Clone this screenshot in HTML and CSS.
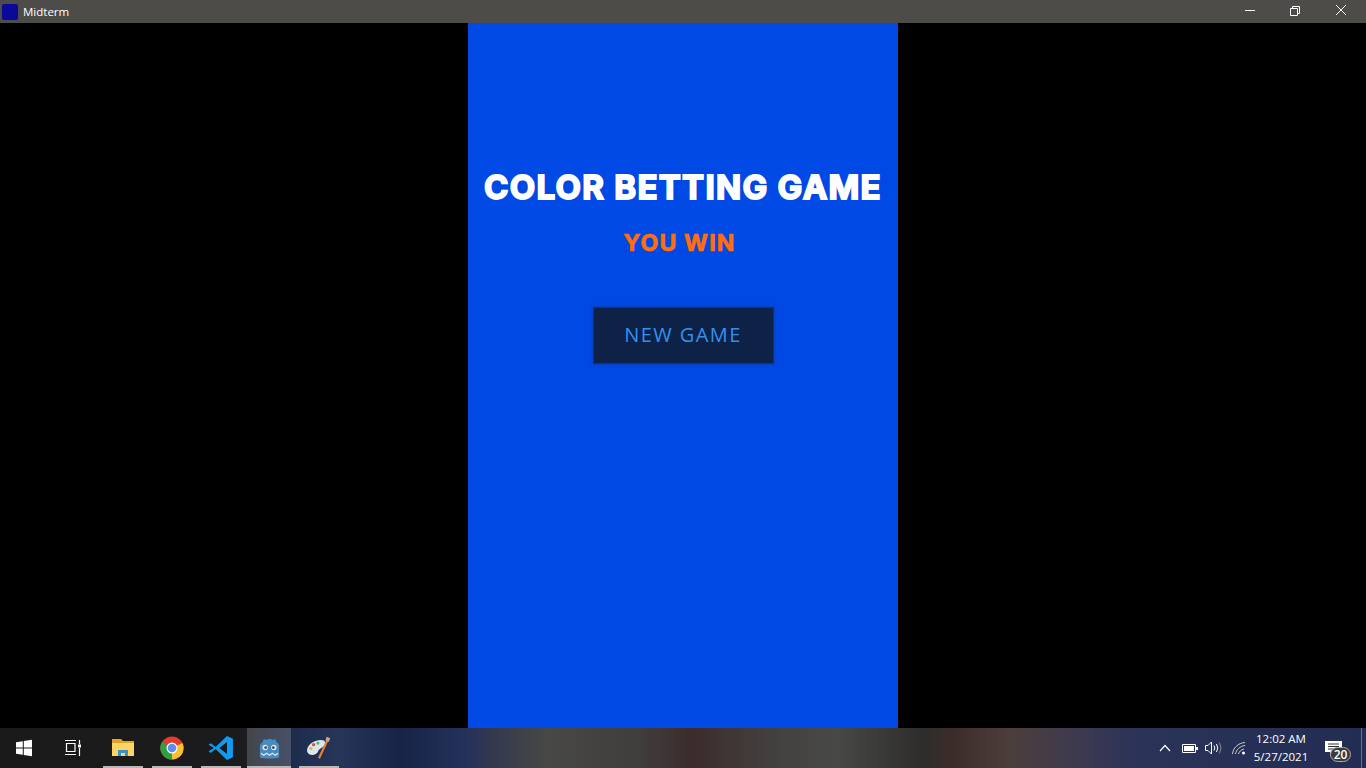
FILE: index.html
```html
<!DOCTYPE html>
<html>
	<head>
		<meta charset="UTF-8">
		<title>Midterm</title>
		<link rel="stylesheet" href="styles.css">
	</head>
	<body>
		<div class="titlebar">
			<span class="app-icon"></span>
			<span class="app-name">Midterm</span>
			<div class="win-btns">
				<svg class="win-btn" viewBox="0 0 46 23"><path d="M17 10.500h10" stroke="#fff" fill="none"/></svg>
				<svg class="win-btn" viewBox="0 0 46 23"><path d="M16.500 8.500h7v7h-7zM18.500 8.500v-2h7v7h-2" stroke="#fff" fill="none"/></svg>
				<svg class="win-btn" viewBox="0 0 46 23"><path d="M16 5l10 10M26 5l-10 10" stroke="#fff" fill="none"/></svg>
			</div>
		</div>

		<div class="stage">
			<div class="game">
				<h1 class="game-title">COLOR BETTING GAME</h1>
				<p class="game-result">YOU WIN</p>
				<button class="new-game">NEW GAME</button>
			</div>
		</div>

		<div class="taskbar">
			<div class="task-icon start">
				<svg width="18" height="18" viewBox="0 0 18 18"><path d="M1 3.200l6.800-1v6.300H1zM8.800 2l8.200-1.200v7.700H8.800zM1 9.500h6.800v6.300l-6.800-1zM8.800 9.500H17v7.700L8.800 16z" fill="#fff"/></svg>
			</div>
			<div class="task-icon view">
				<svg width="20" height="18" viewBox="0 0 20 18" fill="none" stroke="#fff" stroke-width="1.200"><path d="M2 1.500h11M3.500 4.500h8.500v8h-8.500zM2 15.500h11M16.500 1v4M16.500 9v8"/><rect x="15" y="5.500" width="3" height="3" fill="#fff" stroke="none"/></svg>
			</div>
			<div class="task-icon open">
				<svg width="24" height="20" viewBox="0 0 24 20"><path d="M1 1h9l2 2h11v15H1z" fill="#e0a526"/><path d="M1 5h22v13H1z" fill="#fdd562"/><path d="M7 18v-6h10v6h-3v-3h-4v3z" fill="#3b8fd0"/></svg>
			</div>
			<div class="task-icon open">
				<svg width="24" height="24" viewBox="0 0 24 24"><circle cx="12" cy="12" r="11.500" fill="#e33b2e"/><path d="M12 12L22.500 7A11.500 11.500 0 0 1 12 23.500z" fill="#fbc02d"/><path d="M12 12L12 23.500A11.500 11.500 0 0 1 2 6z" fill="#2f9e44"/><circle cx="12" cy="12" r="5.500" fill="#fff"/><circle cx="12" cy="12" r="4.300" fill="#5a8ef0"/></svg>
			</div>
			<div class="task-icon open">
				<svg width="26" height="26" viewBox="0 0 24 24"><path d="M17.500 1L23 3.500v17L17.500 23 7 13l-4.500 3.500L.5 15l5-3-5-3 2-1.500L7 11z" fill="#0f9bf0"/><path d="M17.500 6.500L10.500 12l7 5.500z" fill="#1a1a1a"/></svg>
			</div>
			<div class="task-icon open active">
				<svg width="25" height="23" viewBox="0 0 26 24"><path d="M3 10c0-2 1-4 3-5l1-3 3 1 1.500-1h3L16 3l3-1 1 3c2 1 3 3 3 5v11c-3 2-17 2-20 0z" fill="#478cbf"/><circle cx="8.500" cy="11" r="2.800" fill="#dfe6ec"/><circle cx="17.500" cy="11" r="2.800" fill="#dfe6ec"/><circle cx="9" cy="11" r="1.400" fill="#414042"/><circle cx="17" cy="11" r="1.400" fill="#414042"/><path d="M4 17l3 2 3-2 3 2 3-2 3 2 3-2" fill="none" stroke="#dfe6ec" stroke-width="1.200"/></svg>
			</div>
			<div class="task-icon open">
				<svg width="28" height="27" viewBox="0 0 26 24"><path d="M2 15C1 9 8 4 15 4c4 0 5 3 3 5-2 3-5 3-6 6s-8 5-10 0z" fill="#dce6ee"/><circle cx="8" cy="8.500" r="1.500" fill="#d84a3a"/><circle cx="12" cy="7" r="1.500" fill="#5cb85c"/><circle cx="5.500" cy="12" r="1.500" fill="#e8b93a"/><path d="M21 4l-8 17" stroke="#e8872a" stroke-width="2"/><path d="M20 1l3.500 1.500L22 6l-3-1.500z" fill="#c9a77c"/></svg>
			</div>

			<div class="tray">
				<svg class="chevron" width="12" height="8" viewBox="0 0 12 8"><path d="M1 7l5-5.500L11 7" fill="none" stroke="#fff" stroke-width="1.200"/></svg>
				<svg class="battery" width="16" height="9" viewBox="0 0 16 9"><path d="M.5.500h13v8H.5z" fill="none" stroke="#fff"/><rect x="2" y="2" width="10" height="5" fill="#fff"/><rect x="14" y="3" width="2" height="3" fill="#fff"/></svg>
				<svg class="speaker" width="17" height="14" viewBox="0 0 17 14" fill="none" stroke="#fff"><path d="M.5 4.500h2.500L6.500 1v12L3 9.500H.5z"/><path d="M9 4.500q1.500 2.500 0 5M11.500 3q2.500 4 0 8"/><path d="M14.500 1.500q3 5.500 0 11" stroke="#888"/></svg>
				<svg class="wifi" width="14" height="14" viewBox="0 0 14 14" fill="none" stroke="#ccc"><path d="M.5 13C1 7 6 2 13 1.500M3.500 13C4 9 8 5 13 4.500M6.500 13C7 11 9 8.500 12 8"/><circle cx="11.500" cy="12" r="1.500" fill="#fff" stroke="none"/></svg>
				<div class="clock">
					<span>12:02 AM</span>
					<span>5/27/2021</span>
				</div>
				<div class="notify">
					<svg width="17" height="15" viewBox="0 0 17 15"><path d="M0 0h17v11H8l-3 4v-4H0z" fill="#fff"/><path d="M3 3h11M3 5.500h11M3 8h7" stroke="#333"/></svg>
					<span class="notify-count">20</span>
				</div>
				<div class="show-desktop"></div>
			</div>
		</div>
	</body>
</html>
```

FILE: styles.css
```css
* {margin: 0; padding: 0; box-sizing: border-box;}
html, body {height: 100%; overflow: hidden;}
body {
	display: flex;
	flex-direction: column;
	background: #000;
	font-family: "Open Sans", "Liberation Sans", sans-serif;
}

/* title bar */
.titlebar {
	height: 23px;
	display: flex;
	align-items: center;
	background: #4d4c49;
	color: #fff;
	padding-left: 2px;
}
.app-icon {
	width: 16px; height: 16px;
	background: #0a0a9a;
	border-radius: 2px;
}
.app-name {
	margin-left: 5px;
	font-size: 11.500px;
	font-family: "Open Sans", sans-serif;
}
.win-btns {
	margin-left: auto;
	display: flex;
}
.win-btn {
	width: 46px; height: 23px;
	display: block;
}

/* game */
.stage {
	flex: 1;
	display: flex;
	justify-content: center;
}
.game {
	width: 430px;
	background: #0049e4;
	display: flex;
	flex-direction: column;
	align-items: center;
	padding-top: 143px;
}
.game-title {
	font-family: "Inter", sans-serif;
	font-size: 33px;
	line-height: 42px;
	font-weight: 700;
	letter-spacing: 1.300px;
	color: #fff;
	-webkit-text-stroke: 1.800px #fff;
	white-space: nowrap;
}
.game-result {
	font-family: "Inter", sans-serif;
	font-size: 23px;
	line-height: 30px;
	font-weight: 700;
	letter-spacing: 1.200px;
	color: #ff6e0c;
	-webkit-text-stroke: .7px #ff6e0c;
	margin-top: 20px;
	margin-right: 7px;
}
.new-game {
	width: 181px; height: 57px;
	margin-top: 49px;
	padding-bottom: 2px;
	background: #0d2246;
	border: 1px solid #0b3188;
	box-shadow: 0 0 3px #0a3aa0;
	color: #3390f0;
	font-family: "Open Sans", sans-serif;
	font-size: 20px;
	letter-spacing: 1.400px;
}

/* taskbar */
.taskbar {
	height: 40px;
	display: flex;
	align-items: stretch;
	color: #fff;
	background: linear-gradient(90deg, #1a1a1a 0, #1b1b1d 240px, #1f2d50 300px, #263558 340px, #172448 400px, #25325a 470px, #33384f 490px, #484846 547px, #403d3d 640px, #3b2d2c 691px, #434241 780px, #484846 836px, #2d2c2a 924px, #3b2c2a 950px, #4c3e3c 1012px, #3a3852 1090px, #2a3358 1136px, #232c52 1366px);
}
.task-icon {
	width: 49px;
	display: flex;
	align-items: center;
	justify-content: center;
	position: relative;
}
.task-icon.start {width: 48px;}
.task-icon.view {width: 50px;}
.task-icon.open::after {
	content: "";
	position: absolute;
	left: 5px; right: 4px; bottom: 0;
	height: 2px;
	background: #b8b8b8;
}
.task-icon.active {
	width: 44px;
	margin: 0 3px 0 2px;
	background: rgba(255, 255, 255, .18);
}
.task-icon.active::after {left: 0; right: 0;}

.tray {
	margin-left: auto;
	display: flex;
	align-items: center;
}
.tray svg {display: block;}
.chevron {margin-right: 11px;}
.battery {margin-right: 7px;}
.speaker {margin-right: 10px;}
.wifi {margin-right: 6px;}
.clock {
	width: 58px;
	display: flex;
	flex-direction: column;
	align-items: center;
	font-family: "Open Sans", sans-serif;
	font-size: 11.500px;
	line-height: 18px;
}
.notify {
	width: 51px;
	height: 100%;
	position: relative;
	display: flex;
	align-items: center;
	padding-left: 15px;
}
.notify-count {
	position: absolute;
	left: 20px; top: 19px;
	width: 21px; height: 15px;
	border-radius: 8px;
	background: #3a3a3a;
	border: 1px solid #aaa;
	font-size: 12px;
	font-weight: 600;
	line-height: 13px;
	text-align: center;
}
.show-desktop {
	width: 5px;
	height: 100%;
	border-left: 1px solid #6a6f85;
}
```
